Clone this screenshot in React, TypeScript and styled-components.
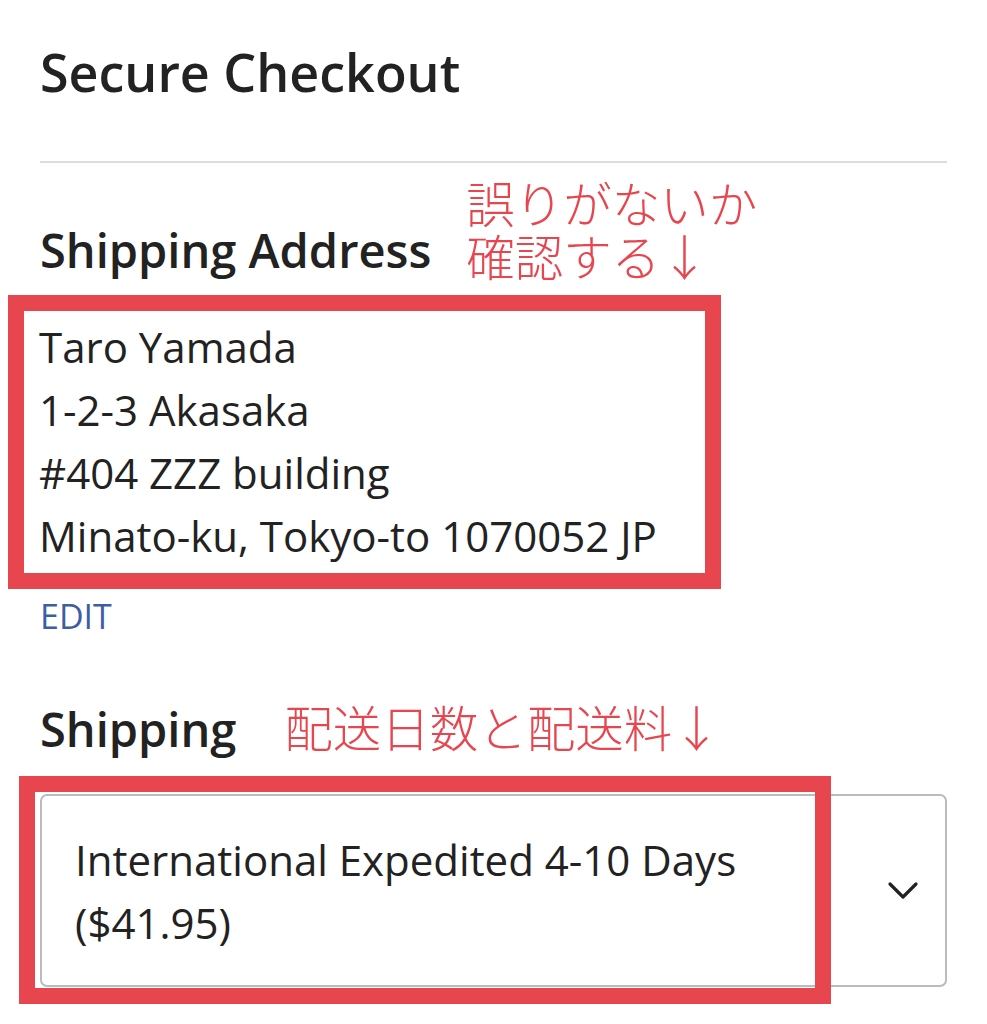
import React from "react";
import styled, { createGlobalStyle } from "styled-components";

const GlobalStyle = createGlobalStyle`
  html, body {
    margin: 0;
    padding: 0;
    background: #ffffff;
  }
  body {
    font-family: "Open Sans", "Noto Sans CJK JP", sans-serif;
    color: #222222;
  }
`;

const RED = "#e8464f";

const Page = styled.main`
  width: 987px;
  height: 1024px;
  box-sizing: border-box;
  padding: 36px 40px 0 40px;
  overflow: hidden;
`;

const Title = styled.h1`
  margin: 0;
  font-size: 52px;
  font-weight: 600;
  line-height: 71px;
  color: #222;
`;

const Divider = styled.hr`
  margin: 54px 0 0 0;
  border: none;
  height: 2px;
  background: #dddddd;
`;

const HeadingRow = styled.div<{ $gap: number; $top: number; $align: string }>`
  display: flex;
  align-items: ${(p) => p.$align};
  gap: ${(p) => p.$gap}px;
  margin-top: ${(p) => p.$top}px;
`;

const SectionTitle = styled.h2`
  margin: 0;
  font-size: 47px;
  font-weight: 600;
  line-height: 64px;
  color: #222;
  white-space: nowrap;
`;

const Note = styled.div`
  font-family: "Noto Sans CJK JP", sans-serif;
  font-weight: 300;
  font-size: 48.5px;
  line-height: 53px;
  color: ${RED};
  white-space: nowrap;
`;

const AddressFrame = styled.div`
  margin: 13px 0 0 -32px;
  width: 713px;
  box-sizing: border-box;
  border: 16px solid ${RED};
  padding: 4px 0 0 15px;
  height: 294px;
`;

const AddressLine = styled.div`
  font-size: 42px;
  line-height: 63px;
  color: #222;
  white-space: nowrap;
`;

const EditLink = styled.a`
  display: block;
  width: fit-content;
  margin-top: 7px;
  font-size: 34px;
  line-height: 40px;
  color: #3d5da5;
  text-decoration: none;
`;

const SelectWrap = styled.div`
  position: relative;
  margin-top: 33px;
`;

const Select = styled.div`
  box-sizing: border-box;
  height: 193px;
  border: 2px solid #bbbbbb;
  border-radius: 7px;
  display: flex;
  align-items: center;
  justify-content: space-between;
  padding: 0 26px 0 33px;
`;

const SelectText = styled.div`
  font-size: 42px;
  line-height: 63px;
  color: #222;
`;

const Chevron = styled.svg`
  width: 32px;
  height: 20px;
  flex: none;
`;

const Highlight = styled.div`
  position: absolute;
  left: -21px;
  top: -18px;
  width: 812px;
  height: 228px;
  box-sizing: border-box;
  border: 16px solid ${RED};
  pointer-events: none;
`;

export default function App() {
  return (
    <>
      <GlobalStyle />
      <Page>
        <Title>Secure Checkout</Title>
        <Divider />
        <HeadingRow $gap={35} $top={13} $align="flex-end">
          <SectionTitle>Shipping Address</SectionTitle>
          <Note>
            誤りがないか
            <br />
            確認する↓
          </Note>
        </HeadingRow>
        <AddressFrame>
          <AddressLine>Taro Yamada</AddressLine>
          <AddressLine>1-2-3 Akasaka</AddressLine>
          <AddressLine>#404 ZZZ building</AddressLine>
          <AddressLine>Minato-ku, Tokyo-to 1070052 JP</AddressLine>
        </AddressFrame>
        <EditLink href="#">EDIT</EditLink>
        <HeadingRow $gap={48} $top={61} $align="baseline">
          <SectionTitle>Shipping</SectionTitle>
          <Note>配送日数と配送料↓</Note>
        </HeadingRow>
        <SelectWrap>
          <Select>
            <SelectText>
              International Expedited 4-10 Days
              <br />
              ($41.95)
            </SelectText>
            <Chevron viewBox="0 0 32 20">
              <path
                d="M3 3 L16 16 L29 3"
                fill="none"
                stroke="#222"
                strokeWidth="3.2"
                strokeLinecap="round"
                strokeLinejoin="round"
              />
            </Chevron>
          </Select>
          <Highlight />
        </SelectWrap>
      </Page>
    </>
  );
}
